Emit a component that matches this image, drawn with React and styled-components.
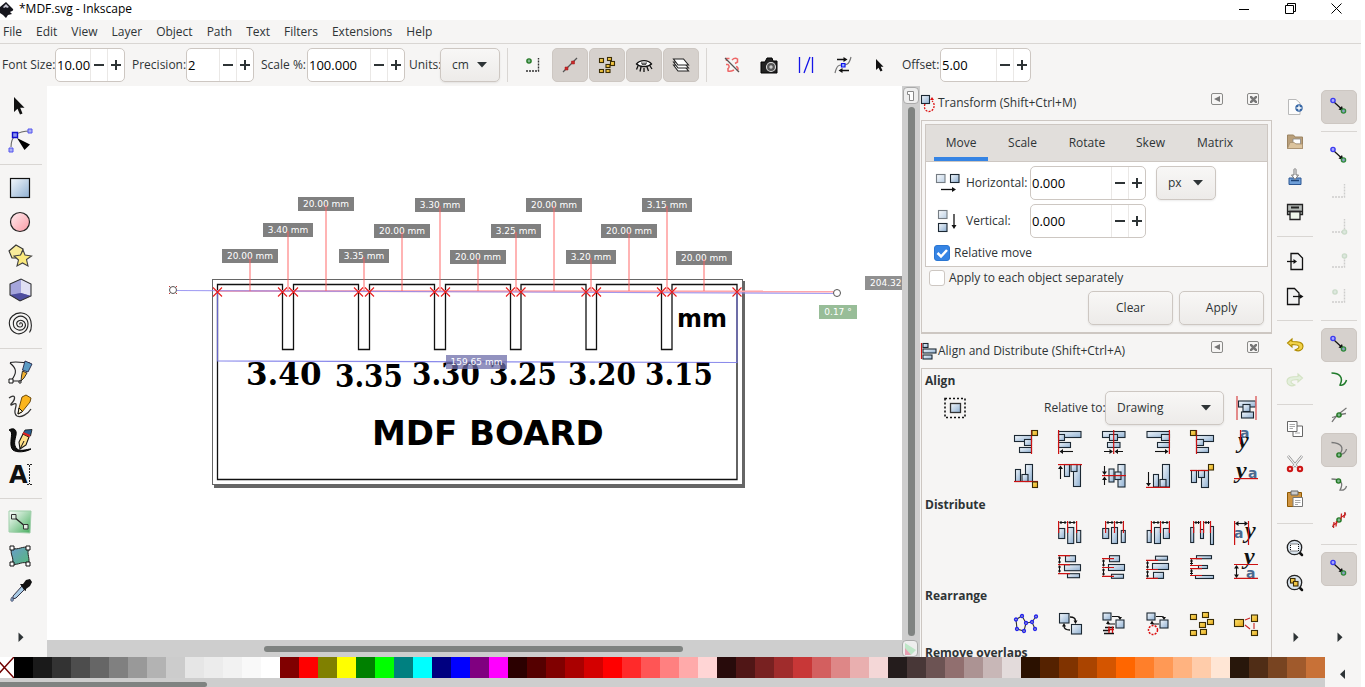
import React from "react";
import styled, { createGlobalStyle, css } from "styled-components";

const ui = '"Open Sans", "Noto Sans", sans-serif';
const line = "#d9d6d3";
const edge = "#cdc7c2";
const ink = "#2e3436";

const GlobalStyle = createGlobalStyle`
  *, *::before, *::after { box-sizing: border-box; }
  html, body { margin: 0; }
  body { background: #fff; color: ${ink}; font: 12px/16px ${ui}; overflow: hidden; }
  button, input, select { font: inherit; color: inherit; margin: 0; }
  svg { display: block; flex: none; }
`;

/* ---------- shell ---------- */

const Window = styled.div`
  display: flex;
  flex-direction: column;
  height: 100vh;
  padding-right: 4px;
  background: #fff;
`;

const TitleBar = styled.header`
  display: flex;
  align-items: center;
  height: 20px;
  padding-right: 2px;
  flex: none;
  background: #fff;
  color: #000;
`;

const Title = styled.h1`
  flex: 1;
  margin: 0 0 2px 4px;
  font-size: 12px;
  font-weight: 400;
`;

const WindowButton = styled.button`
  display: grid;
  place-items: center;
  width: 46px;
  height: 16px;
  margin-bottom: 4px;
  padding: 0;
  border: 0;
  background: none;
`;

const MenuBar = styled.nav`
  display: flex;
  flex: none;
  height: 24px;
  gap: 14px;
  padding: 4px 3px 0;
  background: #f6f5f4;
  border-bottom: 1px solid ${line};
`;

const MenuLink = styled.a`
  color: ${ink};
  text-decoration: none;
`;

const OptionsBar = styled.div`
  display: flex;
  flex: none;
  align-items: center;
  height: 42px;
  padding: 0 2px;
  background: #f6f5f4;
`;

const Main = styled.main`
  display: flex;
  flex: 1;
  min-height: 0;
  background: #f6f5f4;
`;

/* ---------- controls ---------- */

const Field = styled.div`
  display: flex;
  align-items: center;
  margin-right: ${(p) => p.$after || 7}px;
`;

const FieldLabel = styled.label`
  width: ${(p) => p.$w}px;
  flex: none;
  white-space: nowrap;
`;

const SpinBox = styled.div`
  display: flex;
  flex: none;
  width: ${(p) => p.$w}px;
  height: 34px;
  border: 1px solid ${edge};
  border-radius: 5px;
  background: #fff;
  overflow: hidden;
`;

const SpinInput = styled.input`
  flex: 1;
  min-width: 0;
  padding: 0 0 0 1px;
  border: 0;
  background: none;
  color: #000;
  font-size: 13px;
  outline: none;
`;

const SpinButton = styled.button`
  display: grid;
  place-items: center;
  width: 17px;
  padding: 0;
  border: 0;
  border-left: 1px solid #eae8e6;
  background: none;
`;

const raised = css`
  border: 1px solid ${edge};
  border-radius: 5px;
  background: linear-gradient(#f8f7f6, #edebe9);
  box-shadow: 0 1px 2px rgba(0, 0, 0, 0.08);
`;

const SelectWrap = styled.div`
  display: flex;
  align-items: center;
  position: relative;
  width: ${(p) => p.$w}px;
  height: 34px;
  flex: none;
  ${raised}
  svg { position: absolute; right: 12px; pointer-events: none; }
`;

const NativeSelect = styled.select`
  width: 100%;
  height: 100%;
  padding: 0 0 0 11px;
  border: 0;
  appearance: none;
  background: none;
  outline: none;
`;

const PushButton = styled.button`
  width: 85px;
  height: 34px;
  padding: 0;
  ${raised}
`;

const VRule = styled.div`
  width: 1px;
  height: 34px;
  margin: 0 7px;
  background: ${line};
`;

const HRule = styled.div`
  flex: none;
  width: ${(p) => p.$w || 36}px;
  height: 1px;
  margin: 7px 0 ${(p) => p.$below || 7}px;
  background: ${line};
`;

const IconButton = styled.button`
  display: grid;
  place-items: center;
  flex: none;
  width: 36px;
  height: 34px;
  padding: 0;
  border: 1px solid ${(p) => (p.$on ? edge : "transparent")};
  border-radius: 5px;
  background: ${(p) => (p.$on ? "#d6d1cd" : "none")};
  svg { opacity: ${(p) => (p.$dim ? 0.2 : 1)}; }
`;

const OptionButtons = styled.div`
  display: flex;
  gap: 1px;
  margin-right: ${(p) => p.$after || 0}px;
`;

function Spin({ id, label, labelWidth, width, value, after }) {
  return (
    <Field $after={after}>
      {label && <FieldLabel htmlFor={id} $w={labelWidth}>{label}</FieldLabel>}
      <SpinBox $w={width}>
        <SpinInput id={id} defaultValue={value} />
        <SpinButton aria-label="Decrease">
          <svg width="12" height="12"><path d="M1 6H11" stroke={ink} strokeWidth="2" /></svg>
        </SpinButton>
        <SpinButton aria-label="Increase">
          <svg width="12" height="12"><path d="M1 6H11M6 1V11" stroke={ink} strokeWidth="2" /></svg>
        </SpinButton>
      </SpinBox>
    </Field>
  );
}

function Select({ id, value, width, label }) {
  return (
    <SelectWrap $w={width}>
      <NativeSelect id={id} aria-label={label} defaultValue={value}>
        <option>{value}</option>
      </NativeSelect>
      <svg width="10" height="6"><path d="M0 0H10L5 5.5Z" fill={ink} /></svg>
    </SelectWrap>
  );
}

/* ---------- icon drawings ---------- */

const Bar = ({ r }) => (
  <rect x={r[0]} y={r[1]} width={r[2]} height={r[3]} fill="url(#steel)" stroke="#1c2833" strokeWidth="1.1" />
);
const Bars = ({ of }) => of.map((r, i) => <Bar key={i} r={r} />);
const Gold = ({ of }) =>
  of.map((r, i) => (
    <rect key={i} x={r[0]} y={r[1]} width={r[2]} height={r[3]} fill="url(#gold)" stroke="#3b2d05" strokeWidth="1.1" />
  ));
const Red = ({ d }) => <path d={d} fill="none" stroke="#cc1111" strokeWidth="1.2" />;
const Ink = ({ d, w = 1.1, fill = "none", stroke = "#111" }) => (
  <path d={d} fill={fill} stroke={stroke} strokeWidth={w} />
);
const Head = ({ d }) => <path d={d} fill="#111" />;
const LetterA = ({ x, y }) => (
  <text x={x} y={y} fontFamily="DejaVu Sans" fontWeight="700" fontSize="14" fill="#4a6a90">a</text>
);
const LetterY = ({ x, y }) => (
  <text x={x} y={y} fontFamily="Liberation Serif" fontWeight="700" fontStyle="italic" fontSize="24" fill="#111">y</text>
);
const Node = ({ x, y, c, f }) => <circle cx={x} cy={y} r="2.1" fill={f} stroke={c} strokeWidth="1.4" />;
const GreenNode = ({ x, y }) => <Node x={x} y={y} c="#227722" f="#7fb98f" />;

const spread = {
  left: (
    <>
      <Bars of={[[0.7, 7.5, 6, 10], [9.7, 6.5, 6, 16], [18.7, 9.5, 4, 12]]} />
      <Red d="M.6 0V12M9.6 0V12M18.6 0V12" />
      <Ink d="M1.5 1.5H8.5M10.5 1.5H17.5M3 0V3M7 0V3M12 0V3M16 0V3" />
    </>
  ),
  center: (
    <>
      <Bars of={[[0.7, 7.5, 6, 10], [9.5, 6.5, 6, 16], [19.3, 9.5, 4, 12]]} />
      <Red d="M3.6 0V12M12.5 0V12M21.4 0V12" />
      <Ink d="M4.5 1.5H11.5M13.5 1.5H20.5M6 0V3M10 0V3M15 0V3M19 0V3" />
    </>
  ),
  right: (
    <>
      <Bars of={[[1.2, 9.5, 4, 12], [8.5, 6.5, 6, 16], [17.4, 7.5, 6, 10]]} />
      <Red d="M5.4 0V12M14.5 0V12M23.4 0V12" />
      <Ink d="M6.3 1.5H13.5M15.5 1.5H22.5M8 0V3M12 0V3M17 0V3M21 0V3" />
    </>
  ),
  gaps: (
    <>
      <Bars of={[[0.7, 6.5, 3, 15], [10.5, 8.5, 3, 9], [20.5, 5.5, 3, 18]]} />
      <Red d="M3.6 0V12M10.5 0V12M13.6 0V12M20.5 0V12" />
      <Ink d="M4.3 1.5H9.8M14.3 1.5H19.8M6 0V3M8.5 0V3M16 0V3M18.5 0V3" />
    </>
  ),
};
const transpose = (drawing) => <g transform="matrix(0 1 1 0 0 0)">{drawing}</g>;

const snapPair = (
  <>
    <Ink d="M7 7L14 13.5" w={1.2} />
    <Head d="M16.5 16L11.500 14.500L15 11Z" />
    <Node x={6} y={5.5} c="#3a3af0" f="#a8a8ff" />
    <Node x={16.5} y={16} c="#2f8a3a" f="#8b9fc4" />
  </>
);
const dottedCorner = <path d="M5 18H17.5V5" fill="none" stroke="#333" strokeWidth="1.4" strokeDasharray="2 1" />;
const pageShape = (
  <path d="M8 4.5H15L19.5 9V20.5H8Z" fill="#f1f1f1" stroke="#111" strokeWidth="1.3" />
);
const lens = (
  <>
    <path d="M16.5 16.500L19 19" stroke="#111" strokeWidth="2.500" strokeLinecap="round" />
    <circle cx="11.5" cy="11.5" r="7.2" fill="#dbe5ee" stroke="#222" strokeWidth="1.3" />
  </>
);

const icons = {
  pointer: <Head d="M6 3V18L9.500 14.800L12 20.500L14.500 19.400L12.200 13.800H16.500Z" />,
  nodeTool: (
    <>
      <path d="M3 19C3 8 9 3 22 3" fill="none" stroke="#666" strokeWidth="1.1" />
      <path d="M9 10L22 16.500L16.5 22Z" fill="#000" />
      <path d="M1 20H5V24H1ZM20 1H24V5H20Z" fill="#aab0f5" stroke="#5555ee" />
      <path d="M4.5 4.5H9.5V9.5H4.5Z" fill="#8d95ee" stroke="#1111cc" strokeWidth="1.4" />
    </>
  ),
  rect: <rect x="2.5" y="2.5" width="19" height="19" fill="url(#steel)" stroke="#111" strokeWidth="1.2" />,
  ellipse: <circle cx="12" cy="12" r="9.5" fill="url(#pink)" stroke="#222" strokeWidth="1.2" />,
  star: (
    <>
      <path d="M8 1L15 5L12 14L4 14L1 7Z" fill="#f8eb9a" stroke="#333" strokeWidth="1.1" />
      <path d="M15 6L17 11L23.5 12L18.5 15.5L20 22L14.5 19L9 22L10.5 16L6 12L12.5 11Z" fill="#fbe97c" stroke="#444" strokeWidth="1.1" />
    </>
  ),
  box: (
    <>
      <path d="M2 6L13 1L23 6V18L12 23L2 17Z" fill="#7272bb" />
      <path d="M2 6L13 1V15L2 17Z" fill="#a5a5dc" />
      <path d="M13 1L23 6V18L13 15Z" fill="#e0e0f4" />
      <path d="M2 17L13 15L23 18L12 23Z" fill="#4d4d9f" />
      <path d="M2 6L13 1L23 6V18L12 23L2 17Z" fill="none" stroke="#333" strokeWidth="1.1" />
    </>
  ),
  spiral: (
    <path d="M12 12.500C11 10.500 14 10 14.500 12.500C14.800 15.500 10 16 9 13C7.500 9 13 6.500 16.300 10C19.500 14.500 15 19 10.500 18C4 16.500 4 8.500 8.500 5.500C14 2 20 6 20 12C20 19 14 23 8.500 21.500C1 19 -1 9 4.500 4C10 -1 18 .5 21.500 5.500C24 10 24 17 21.500 20.500" fill="none" stroke="#222" strokeWidth="1.1" />
  ),
  pen: (
    <>
      <path d="M2 2.500C9 1 16 3 22 3M2 3C8 8 10 12 3 21H13" fill="none" stroke="#222" strokeWidth="1.1" />
      <path d="M1 19H5V23H1Z" fill="#fff" stroke="#111" /><circle cx="12" cy="22" r="1.200" fill="#fff" stroke="#111" />
      <path d="M17 1L24 4L20 12L14.500 10Z" fill="#5b9bc4" stroke="#224" strokeWidth=".9" />
      <path d="M14.500 11L19 13L16 18L13 21L13.500 16Z" fill="#f0b030" stroke="#222" strokeWidth=".9" />
    </>
  ),
  pencil: (
    <>
      <path d="M1 4C8 -1 8 5 3 10C2 13 7 8 8 10C9 13 4 19 9 22C13 24 20 20 23 15" fill="none" stroke="#333" strokeWidth="1.300" />
      <path d="M14 3L18 1L23 4L22 8L14 18L10 20L11 14Z" fill="#fbb51e" stroke="#5b3a00" strokeWidth=".9" />
      <path d="M11 14L14.500 17.500L10 20Z" fill="#fff3c6" stroke="#111" />
    </>
  ),
  calligraphy: (
    <>
      <path d="M1 2C6 -1 9 2 8 7C7 12 5 17 9 21C13 24 19 21 23 21C18 24 9 25 5 22C1 18 4 9 3.500 5C3.200 3 2 3 1 2Z" fill="#111" stroke="#000" />
      <path d="M15 6L21 9L18 17L12 21L11 14Z" fill="#ffe08a" stroke="#111" strokeWidth="1.100" />
      <path d="M12 21L16 13" stroke="#111" /><path d="M17 2L24 1.500L22.500 8L15 5.500Z" fill="#285f92" stroke="#111" strokeWidth=".8" />
      <path d="M15 5L22 8" stroke="#d22" strokeWidth="2" />
    </>
  ),
  text: (
    <>
      <text x="1" y="21" fontFamily="DejaVu Sans" fontWeight="700" fontSize="24" fill="#111">A</text>
      <path d="M19 2.500H24M19 22.500H24M21.500 3V22" stroke="#222" strokeDasharray="2 1" />
    </>
  ),
  gradient: (
    <>
      <path d="M1 1H23L22 23L1 22Z" fill="url(#mint)" stroke="#9fcfaa" />
      <path d="M6 7L18 17" stroke="#222" strokeWidth="1.300" />
      <path d="M3.500 4.500H8V9H3.500ZM15.500 14.500H20V19H15.500Z" fill="#dfeee1" stroke="#333" />
    </>
  ),
  mesh: (
    <>
      <path d="M4 4C10 7 15 1 21 4C18 10 23 15 20 20C15 16 10 22 4 20C7 14 1 10 4 4Z" fill="url(#teal)" stroke="#222" />
      <path d="M2 2H6V6H2ZM18 2H22V6H18ZM18 18H22V22H18ZM2 18H6V22H2Z" fill="#fff" stroke="#111" />
    </>
  ),
  dropper: (
    <>
      <path d="M14 8L17 11L8 20L5 21L5 18Z" fill="#a9cbe6" stroke="#334" />
      <path d="M12 6L15 6L18 2L22 1L24 4L22 8L18 11L18 13L16 12Z" fill="#111" />
      <path d="M4 19C1 23 4 24 5 23C6 22 5 20 4 19Z" fill="#7c9dba" stroke="#446" strokeWidth=".7" />
    </>
  ),
  cornerDot: (
    <>
      {dottedCorner}
      <GreenNode x={8} y={8} />
    </>
  ),
  crossLine: (
    <>
      <path d="M5 19L19 5" stroke="#555" strokeWidth="1.200" />
      <path d="M7 14H10V17H7ZM13.500 8H16.500V11H13.500Z" fill="#c92a2a" stroke="#a01818" strokeWidth=".5" />
    </>
  ),
  goldSquares: <Gold of={[[4.5, 5.500, 4, 4], [12.5, 4.500, 4, 3], [15.5, 8.500, 4, 4], [11, 11.500, 4, 3], [4.5, 16.500, 4, 3], [11, 16.500, 4, 3]]} />,
  eye: (
    <>
      <path d="M4.500 11C8 6.500 16 6.500 19.500 11C16 14.500 8 14.500 4.500 11Z" fill="#fff" stroke="#111" strokeWidth="1.300" />
      <path d="M9.500 9.500A2.500 2.500 0 0 0 14.500 9.500" fill="#777" stroke="#333" strokeWidth=".8" />
      <path d="M6 13L4.500 16.500M9 14L8 18.500M12 15V19M15 14L16.500 18M18 13L20 16" stroke="#111" strokeWidth="1.300" />
    </>
  ),
  layers: [12, 9, 6].map((y) => (
    <path key={y} d={`M4.500 ${y}H14.500L19.500 ${y + 6}H9Z`} fill="#fff" stroke="#222" strokeWidth="1.100" />
  )),
  noShape: (
    <>
      <path d="M6.500 8V5.500H9.500M12 7C14 5 16 5 17.500 6V9L15 10.500M16 13.500C18 14 19 16 17 18M14 17C12 18 10 19 8 18V15.500C9.500 14.500 9.500 13 8 11.500H6" fill="none" stroke="#ee6666" strokeWidth="1.500" />
      <path d="M5 5L19 19" stroke="#555" strokeWidth="1.200" />
    </>
  ),
  camera: (
    <>
      <path d="M4 9H8L10 5H15L16 8H20V20H4Z" fill="#222" stroke="#000" />
      <circle cx="14" cy="14" r="4.500" fill="#555" stroke="#ddd" strokeWidth="1.100" /><circle cx="14" cy="14" r="1.700" fill="#ccc" />
    </>
  ),
  parallels: <path d="M5.500 4V20M18.500 4V20M10 20L16 4" stroke="#1515e8" strokeWidth="1.300" />,
  swapNode: (
    <>
      <path d="M4 20C6 11 9 12 12 12C15 12 18 12 20 4" fill="none" stroke="#777" strokeWidth="1.200" />
      <Ink d="M6 6.500H14M18 17.500H10" w={1.300} /><Head d="M16.500 6.500L12.500 4V9ZM7.500 17.500L11.500 15V20Z" />
      <path d="M10.500 10.500H14V14H10.500Z" fill="#8fb0ff" stroke="#11e" strokeWidth="1.200" />
    </>
  ),
  smallPointer: <Head d="M8 6V17L10.500 14.700L12.500 18.500L14.500 17.500L12.700 13.700H15.500Z" />,
  newDoc: (
    <>
      <path d="M5.500 4.500H13L17 8V19.500H5.500Z" fill="#fcfcfc" stroke="#b9b9b9" />
      <circle cx="16" cy="13" r="3.700" fill="#3465a4" /><path d="M13.500 13H18.500M16 10.500V15.500" stroke="#fff" strokeWidth="1.300" />
    </>
  ),
  open: (
    <>
      <path d="M4.500 5H10.500L12 7H19.500V18.500H4.500Z" fill="#b99f7a" stroke="#9c8462" />
      <path d="M10 9H17.500V14H10Z" fill="#fff" stroke="#888" strokeWidth=".8" />
      <path d="M4.500 18.500L7 12.500H11L13 14H19.500V18.500Z" fill="#dcc49e" stroke="#a89070" strokeWidth=".8" />
    </>
  ),
  save: (
    <>
      <path d="M6 13H18V19.500H6Z" fill="#6f9fd8" stroke="#2c5793" /><path d="M8 15.500H16" stroke="#1e4478" strokeWidth="1.500" />
      <path d="M11 4.500C11 3.500 13 3.500 13 4.500V10H15.500L12 14.500L8.500 10H11Z" fill="#fff" stroke="#777" />
    </>
  ),
  print: (
    <>
      <path d="M4.500 4.500H19.500V14.500H4.500Z" fill="#b4b9b6" stroke="#222" strokeWidth="1.300" />
      <path d="M8 7.500H16" stroke="#222" strokeWidth="2" /><path d="M7 11.500H17V19.500H7Z" fill="#eef6ea" stroke="#222" strokeWidth="1.300" />
      <path d="M5 11.500H19" stroke="#222" strokeWidth="1.500" />
    </>
  ),
  importDoc: (
    <>
      {pageShape}
      <Ink d="M4 12.500H11" w={1.300} /><Head d="M14 12.500L10.500 10V15Z" />
    </>
  ),
  exportDoc: (
    <>
      <path d="M4.500 4.500H11.500L16 9V20.500H4.500Z" fill="#f1f1f1" stroke="#111" strokeWidth="1.300" />
      <Ink d="M10 12.500H17" w={1.300} /><Head d="M20.500 12.500L16.500 10V15Z" />
    </>
  ),
  undo: <path d="M9 6L4.500 10L9 14V11.500C14 11.500 16 12 16 14C16 16 13 16 12 17C16 19 20 17 20 13.500C20 9 15 8.500 9 8.500Z" fill="#f2d24a" stroke="#b08c00" strokeWidth="1.100" />,
  redo: <path d="M15 6L19.500 10L15 14V11.500C10 11.500 8 12 8 14C8 16 11 16 12 17C8 19 4 17 4 13.500C4 9 9 8.500 15 8.500Z" fill="#9ad880" stroke="#4e9a06" strokeWidth="1.100" />,
  copy: (
    <>
      <path d="M10 9H19.500V19.500H10Z" fill="#fff" stroke="#666" /><path d="M4.500 4.500H14V14.500H4.500Z" fill="#fff" stroke="#666" />
      <path d="M6.500 7.500H12M6.500 9.500H12M6.500 11.500H10M12 16H17" stroke="#aaa" />
    </>
  ),
  cut: (
    <>
      <path d="M5 4L14 15M19 4L10 15" stroke="#777" strokeWidth="2.400" /><path d="M5 4L14 15M19 4L10 15" stroke="#f2f2f2" strokeWidth="1.200" />
      <circle cx="7" cy="17" r="2.200" fill="#fbb" stroke="#cc1515" strokeWidth="2" /><circle cx="17" cy="17" r="2.200" fill="#fbb" stroke="#cc1515" strokeWidth="2" />
    </>
  ),
  paste: (
    <>
      <path d="M4.500 5.500H18.500V19.500H4.500Z" fill="#cf9440" stroke="#8f5902" /><path d="M8 4H15V8H8Z" fill="#ccc" stroke="#666" />
      <path d="M10 10.500H19.500V19.500H10Z" fill="#fff" stroke="#777" /><path d="M12 13.500H17.500M12 15.500H17.500M12 17.500H15" stroke="#aaa" />
    </>
  ),
  zoomSelection: (
    <>
      {lens}
      <rect x="7.500" y="8" width="8" height="7" fill="#fff" stroke="#111" strokeDasharray="1 1" />
    </>
  ),
  zoomDrawing: (
    <>
      {lens}
      <Gold of={[[7.500, 7.500, 4.500, 4.500], [10.500, 10.500, 4.500, 4.500]]} />
    </>
  ),
  snapPair,
  corner: dottedCorner,
  cornerEnd: (
    <>
      {dottedCorner}
      <GreenNode x={17.500} y={18} />
    </>
  ),
  cornerUp: (
    <>
      {dottedCorner}
      <GreenNode x={17.500} y={7} />
    </>
  ),
  greenCurve: (
    <path d="M4.500 5C12 5 17 9 13 17C17 18 19 14 19.500 12" fill="none" stroke="#1f7a2a" strokeWidth="1.500" />
  ),
  crossing: (
    <>
      <path d="M5 19C9 12 14 9 19.500 5M5 14.500C10 13 14 11 19 10.500" fill="none" stroke="#777" strokeWidth="1.300" /><GreenNode x={12} y={12} />
    </>
  ),
  nodeCurve: (
    <>
      <path d="M4.500 4.500C15 5 17 10 13 16C16 17 19 14 19.500 11" fill="none" stroke="#777" strokeWidth="1.300" /><GreenNode x={12} y={17} />
    </>
  ),
  topCurve: (
    <>
      <path d="M4.500 6C14 6 17 10 13 17C17 18 19 15 19.500 13" fill="none" stroke="#777" strokeWidth="1.300" /><GreenNode x={11.500} y={8} />
    </>
  ),
  midpoints: (
    <>
      <path d="M5 19L19 5" stroke="#666" /><GreenNode x={12} y={12} />
      <path d="M7 14L6.500 20M9.500 13L9 18.500M5.500 17.500L10.500 14.500M14.500 5.500L14 11.500M18 4L17 10M13.500 9.500L19 6.500" stroke="#cc2222" strokeWidth="1.300" />
    </>
  ),
  transform: (
    <>
      <path d="M8 13C6 18 10 22 14 20C18 18 18 12 15 10" fill="none" stroke="#d11" strokeWidth="1.300" strokeDasharray="2 1.200" />
      <Bar r={[4.500, 4.500, 8, 8]} />
      <path d="M13 9L17 9L15 6Z" fill="#d11" />
    </>
  ),
  alignDock: (
    <>
      <path d="M4.500 4V20" stroke="#c11" strokeWidth="1.200" />
      <Bars of={[[6, 4.500, 5, 4], [6, 10, 13, 4], [6, 16, 9, 4]]} />
    </>
  ),
  moveH: (
    <>
      <g opacity=".6"><Bar r={[0.500, 3.500, 8.500, 8]} /></g>
      <Bar r={[14.500, 3.500, 8.500, 8]} />
      <Ink d="M5 18.500H17" w={1.300} /><Head d="M20 18.500L16 16V21Z" />
    </>
  ),
  moveV: (
    <>
      <g opacity=".6"><Bar r={[2.500, 1.500, 8.500, 8]} /></g>
      <Bar r={[2.500, 14.500, 8.500, 8]} />
      <Ink d="M18 5V17" w={1.300} /><Head d="M18 20L15.500 16H20.500Z" />
    </>
  ),
  selectionBox: (
    <>
      <rect x="2" y="2.500" width="20" height="19" fill="none" stroke="#111" strokeWidth="1.600" strokeDasharray="2 2" />
      <rect x="7.500" y="7.500" width="10" height="9" fill="url(#steel)" stroke="#333" strokeWidth="1.300" />
    </>
  ),
  asGroup: (
    <>
      <Bars of={[[4.500, 5, 17, 6], [9, 8.500, 7, 7], [7.500, 16, 12, 6]]} />
      <path d="M3 0V24M22 0V24" stroke="#e07878" strokeWidth="1.700" />
    </>
  ),
  alignRightOut: (
    <>
      <Bars of={[[0.500, 5.500, 17, 6], [5.500, 17.500, 12, 5], [10.500, 9.500, 7, 6]]} />
      <Red d="M17.500 0V24" /><Gold of={[[18, 0.500, 5.500, 5]]} />
    </>
  ),
  alignLeft: (
    <>
      <Bars of={[[0.500, 1.500, 22.500, 6], [0.500, 4.500, 6, 6], [0.500, 12.500, 12, 5]]} />
      <Red d="M.6 0V24" /><Ink d="M4 21.500H15" /><Head d="M1.500 21.500L5 19V24Z" />
    </>
  ),
  alignCenter: (
    <>
      <Bars of={[[0.500, 1.500, 22.500, 6], [7.500, 4.500, 8, 6], [5.500, 12.500, 12.500, 5]]} />
      <Red d="M11.700 0V24" /><Ink d="M2 21.500H8M15 21.500H21" /><Head d="M11 21.500L7.500 19V24ZM12.500 21.500L16 19V24Z" />
    </>
  ),
  alignRight: (
    <>
      <Bars of={[[1, 1.500, 22.500, 6], [15.500, 4.500, 8, 6], [11.500, 12.500, 12, 5]]} />
      <Red d="M23.400 0V24" /><Ink d="M9 21.500H20" /><Head d="M22.500 21.500L19 19V24Z" />
    </>
  ),
  alignLeftOut: (
    <>
      <Bars of={[[6.500, 5.500, 17, 6], [6.500, 9.500, 7, 6], [6.500, 17.500, 12, 5]]} />
      <Red d="M6.500 0V24" /><Gold of={[[0.500, 0.500, 5.500, 5]]} />
    </>
  ),
  textAnchorsV: (
    <>
      <LetterA x={6} y={8} /><LetterY x={4} y={18} /><Red d="M6.500 0V14" />
    </>
  ),
  alignBottomOut: (
    <>
      <Bars of={[[1.500, 5.500, 5, 12], [11.500, 0.500, 7, 17], [8, 10.500, 6, 7]]} />
      <Red d="M0 17.500H24" /><Gold of={[[18.500, 18, 5, 5.500]]} />
    </>
  ),
  alignTop: (
    <>
      <Bars of={[[6.500, 0.500, 5, 12], [15.500, 0.500, 7, 22], [13, 0.500, 6, 7]]} />
      <Red d="M0 .6H24" /><Ink d="M2.500 4V15" /><Head d="M2.500 1.500L0 5H5Z" />
    </>
  ),
  alignMiddle: (
    <>
      <Bars of={[[7, 5, 5, 13], [16, 0.500, 7, 22.500], [13, 8, 6, 7.500]]} />
      <Red d="M0 11.600H24" /><Ink d="M2.500 2V8M2.500 15V21" /><Head d="M2.500 11L0 7.500H5ZM2.500 12.500L0 16H5Z" />
    </>
  ),
  alignBottom: (
    <>
      <Bars of={[[7.500, 10.500, 5, 12.500], [16.500, 0.500, 7, 22.500], [14, 15.500, 6, 7.500]]} />
      <Red d="M0 23.400H24" /><Ink d="M2.500 8V19" /><Head d="M2.500 22.500L0 19H5Z" />
    </>
  ),
  alignTopOut: (
    <>
      <Bars of={[[1.500, 6.500, 5, 12], [11.500, 6.500, 7, 17], [8.500, 6.500, 6, 7]]} />
      <Red d="M0 6.500H19" /><Gold of={[[18.500, 0.500, 5, 5.500]]} />
    </>
  ),
  textAnchorsH: (
    <>
      <LetterY x={2} y={14} /><LetterA x={14} y={14} /><Red d="M0 14.600H24" />
    </>
  ),
  spreadLeft: spread.left,
  spreadCenter: spread.center,
  spreadRight: spread.right,
  spreadGapsH: spread.gaps,
  spreadTop: transpose(spread.left),
  spreadMiddle: transpose(spread.center),
  spreadBottom: transpose(spread.right),
  spreadGapsV: transpose(spread.gaps),
  spreadTextH: (
    <>
      <LetterA x={0} y={17} /><LetterY x={11} y={17} /><Red d="M.6 0V24M14.500 0V24" />
      <Ink d="M3 2.500H12" /><Head d="M1 2.500L4.500 0V5ZM14 2.500L10.500 0V5Z" />
    </>
  ),
  spreadTextV: (
    <>
      <LetterY x={10} y={9} /><LetterA x={12} y={23} /><Red d="M0 9.500H24M0 23.400H24" />
      <Ink d="M2.500 12V21" /><Head d="M2.500 10L0 13.500H5ZM2.500 23L0 19.500H5Z" />
    </>
  ),
  network: (
    <>
      <path d="M2 7.500L8 4L12 11L10 19L3 17ZM12 11L18 10L22 4.500M18 10L21 17" fill="none" stroke="#333" strokeWidth="1.100" />
      {[[2, 7.500], [8, 4], [3, 17], [10, 19], [12, 11], [18, 10], [22, 4.500], [21, 17]].map(([x, y]) => (
        <circle key={`${x}-${y}`} cx={x} cy={y} r="1.500" fill="#aab" stroke="#2222ee" strokeWidth="1.300" />
      ))}
    </>
  ),
  exchange: (
    <>
      <Bars of={[[1.500, 1.500, 9.500, 9.500], [13.500, 12.500, 10, 9.500]]} />
      <Ink d="M12 5C16 5 17.500 6 17.500 9M12 18C8 18 6 17 6 14" w={1.300} /><Head d="M17.500 12L15.500 8.500H19.500ZM6 11L4 14.500H8Z" />
    </>
  ),
  exchangeZ: (
    <>
      <Bars of={[[1, 1, 8, 7], [14, 8, 8, 8]]} />
      <Ink d="M10 4.500H16C17.500 4.500 18 5 18 6M13 12H6V10" /><Head d="M18 8L16 5H20ZM6 8.500L4 12H8Z" />
      <Ink d="M3 15.500H12M1 18.500H8M2 21.500H12" w={1.600} /><path d="M7 14.500V21M10.500 14.500V21M6 17.500H12" stroke="#c11" strokeWidth="1.300" />
    </>
  ),
  exchangeTurn: (
    <>
      <Bars of={[[1, 1, 8, 7], [14, 8, 8, 8]]} />
      <Ink d="M10 4.500H16C17.500 4.500 18 5 18 6M13 12H6V10" /><Head d="M18 8L16 5H20ZM6 8.500L4 12H8Z" />
      <circle cx="7" cy="18" r="4.500" fill="none" stroke="#d11" strokeWidth="1.500" strokeDasharray="2 1.200" />
    </>
  ),
  randomize: <Gold of={[[0.500, 2.500, 6, 5], [12.500, 0.500, 6, 5], [17.500, 7.500, 6, 5], [9.500, 10.500, 6, 5], [0.500, 18.500, 6, 5], [10.500, 17.500, 6, 5]]} />,
  unclump: (
    <>
      <path d="M11 8L16 6M11 13L16 17M20 11V17" stroke="#c22" strokeWidth="1.100" />
      <Gold of={[[0.500, 7.500, 9, 7], [17.500, 3, 6, 6.500], [17.500, 18.500, 6, 5]]} />
    </>
  ),
  chevron: <path d="M10.500 7.500V17L15.500 12.200Z" fill={ink} />,
  chevronBack: <path d="M14 7.500V17L9 12.200Z" fill={ink} />,
};

const Icon = ({ name }) => (
  <svg width="24" height="24" viewBox="0 0 24 24" overflow="visible" aria-hidden="true">{icons[name]}</svg>
);

const Paints = styled.svg`
  position: absolute;
  width: 0;
  height: 0;
`;

const gradients = [
  ["steel", "#f4f8fc", "#8fb0d2"],
  ["pink", "#ffeef0", "#f99aa4"],
  ["gold", "#ffe36a", "#e3a51a"],
  ["mint", "#ffffff", "#45ad5d"],
  ["teal", "#6a9ccc", "#55b87a"],
];

/* ---------- toolbox and side bars ---------- */

const SideBar = styled.aside`
  display: flex;
  flex-direction: column;
  align-items: center;
  flex: none;
  width: ${(p) => p.$w}px;
  padding: ${(p) => p.$top}px ${(p) => p.$right || 0}px 8px 0;
  background: #f6f5f4;
  overflow: hidden;
`;

const Group = styled.div`
  display: flex;
  flex-direction: column;
  gap: ${(p) => p.$gap || 0}px;
`;

const MoreButton = styled.button`
  display: grid;
  place-items: center;
  flex: none;
  width: 34px;
  height: 24px;
  margin-top: auto;
  padding: 0;
  border: 0;
  background: none;
`;

const tools = [
  ["pointer", "nodeTool"],
  ["rect", "ellipse", "star", "box", "spiral"],
  ["pen", "pencil", "calligraphy", "text"],
  ["gradient", "mesh", "dropper"],
];
const commands = [
  ["newDoc", "open", "save", "print"],
  ["importDoc", "exportDoc"],
  ["undo", "redo"],
  ["copy", "cut", "paste"],
  ["zoomSelection", "zoomDrawing"],
];
const snaps = [
  ["snapPair"],
  ["snapPair", "corner", "cornerEnd", "cornerUp", "cornerDot"],
  ["snapPair", "greenCurve", "crossing", "nodeCurve", "topCurve", "midpoints"],
  ["snapPair"],
];
const dimmed = ["corner", "cornerEnd", "cornerUp", "cornerDot", "redo"];
const pressed = ["0-0", "2-0", "2-3", "3-0"];

function ButtonGroups({ groups, gap, ruleWidth, below, toggles }) {
  return groups.map((names, g) => (
    <React.Fragment key={g}>
      {g > 0 && <HRule $w={ruleWidth} $below={below} />}
      <Group $gap={gap}>
        {names.map((name, i) => (
          <IconButton
            key={i}
            aria-label={name}
            $dim={dimmed.includes(name)}
            $on={toggles && pressed.includes(`${g}-${i}`)}
          >
            <Icon name={name} />
          </IconButton>
        ))}
      </Group>
    </React.Fragment>
  ));
}

/* ---------- canvas ---------- */

const Stage = styled.section`
  display: grid;
  grid-template: minmax(0, 1fr) 17px / minmax(0, 1fr) 18px;
  flex: 1;
  min-width: 0;
  background: #cecece;
`;

const Paper = styled.div`
  background: #fff;
  overflow: hidden;
`;

const VTrack = styled.div`
  display: flex;
  flex-direction: column;
  align-items: center;
  padding: 1px 0 4px;
  gap: 3px;
`;

const VThumb = styled.div`
  flex: 1;
  width: 7px;
  border-radius: 4px;
  background: #7f8381;
`;

const HTrack = styled.div`
  display: flex;
  align-items: center;
`;

const HThumb = styled.div`
  width: 49%;
  height: 6px;
  margin-left: 25.4%;
  border-radius: 3px;
  background: #7f8381;
`;

const CornerButton = styled.button`
  display: grid;
  place-items: center;
  width: 16px;
  height: 17px;
  padding: 0;
  border: 1px solid #aaa;
  border-radius: 4px;
  background: #eee;
`;

const slots = [[282.5, 293.5], [358.5, 369.5], [434.5, 445.5], [510.5, 521], [586, 596.5], [661.5, 672]];
const measures = [
  [222, 249, "20.00 mm"], [263, 223, "3.40 mm"], [298, 197, "20.00 mm"], [339, 249, "3.35 mm"],
  [374, 224, "20.00 mm"], [415, 198, "3.30 mm"], [450, 250, "20.00 mm"], [491, 224, "3.25 mm"],
  [526, 198, "20.00 mm"], [566, 250, "3.20 mm"], [601, 224, "20.00 mm"], [642, 198, "3.15 mm"],
  [676, 251, "20.00 mm"],
];
const numerals = [
  [246, 385, "3.40", "DejaVu Serif"], [335, 387, "3.35"], [412, 385, "3.30"],
  [489, 385, "3.25"], [568, 385, "3.20"], [645, 385, "3.15"],
];

function Tag({ x, y, w, text, fill = "#808080" }) {
  return (
    <>
      <rect x={x} y={y} width={w} height="14" fill={fill} />
      <text x={x + w / 2} y={y + 10} textAnchor="middle" fontFamily="DejaVu Sans" fontSize="9" fill="#fff">{text}</text>
    </>
  );
}

function Drawing() {
  const outline = `M217.500 284.500${slots.map(([a, b]) => `H${a}V349.500H${b}V284.500`).join("")}H737V479.500H217.500Z`;
  const marks = [217.5, ...slots.flat(), 737];
  return (
    <svg width="855" height="554" viewBox="47 86 855 554">
      <path d="M214 486.500H743.500V281" fill="none" stroke="#666" strokeWidth="3" />
      <rect x="212.500" y="279.500" width="530" height="205" fill="#fff" stroke="#666" />
      <path d={outline} fill="none" stroke="#111" strokeWidth="1.300" />
      <g fontWeight="700" fill="#000">
        {numerals.map(([x, y, t, family = "DejaVu Serif Condensed"]) => (
          <text key={t} x={x} y={y} fontFamily={family} fontSize="31">{t}</text>
        ))}
        <text x="372" y="445" fontFamily="DejaVu Sans" fontSize="34">MDF BOARD</text>
        <text x="677" y="327" fontFamily="DejaVu Sans" fontSize="24">mm</text>
      </g>
      <path d="M217.500 292V361L737 362.500V292" fill="none" stroke="#7777e8" strokeOpacity=".85" strokeWidth="1.200" />
      <path d="M217 291L837 291.500" stroke="#ffa6aa" strokeWidth="2" />
      <path d="M177 290.500L833 293.500" stroke="#8b86f0" strokeOpacity=".8" strokeWidth="1.200" />
      {measures.map(([x, y, t]) => (
        <Tag key={x} x={x} y={y} w={t.length > 7 ? 56 : 50} text={t} />
      ))}
      {measures.map(([x, y, t]) => {
        const cx = x + (t.length > 7 ? 28 : 25);
        return <path key={x} d={`M${cx} ${y + 8}V291`} stroke="#ff5a5a" strokeOpacity=".65" strokeWidth="1.400" />;
      })}
      {marks.map((x) => (
        <path key={x} d={`M${x - 4.500} 287.500L${x + 4.500} 296.500M${x + 4.500} 287.500L${x - 4.500} 296.500`} stroke="#e81c1c" strokeWidth="1.100" />
      ))}
      <path d="M169 286L177 294M177 286L169 294" stroke="#c33" />
      <circle cx="173" cy="290" r="3.500" fill="#fff" stroke="#555" />
      <circle cx="837" cy="293" r="3.500" fill="#fff" stroke="#555" />
      <Tag x={865} y={276} w={62} text="204.32 mm" fill="#909090" />
      <Tag x={819} y={305} w={38} text="0.17 °" fill="#98bd98" />
      <Tag x={446} y={355} w={61} text="159.65 mm" fill="rgba(110,110,170,.75)" />
    </svg>
  );
}

/* ---------- dock ---------- */

const Dock = styled.aside`
  display: flex;
  flex-direction: column;
  flex: none;
  width: 352px;
  padding-left: 1px;
  overflow: hidden;
`;

const DockHeader = styled.div`
  display: flex;
  align-items: center;
  flex: none;
  height: 34px;
  padding-right: 13px;
  svg { margin-right: -3px; margin-left: -4px; }
`;

const DockTitle = styled.h2`
  flex: 1;
  margin: 0;
  font-size: 12px;
  font-weight: 400;
`;

const DockButton = styled.button`
  display: grid;
  place-items: center;
  width: 12px;
  height: 12px;
  margin: 0 0 8px 24px;
  padding: 0;
  border: 1px solid #8a8a88;
  border-radius: 2px;
  background: none;
  svg { margin: 0; }
`;

const Frame = styled.section`
  flex: none;
  border: solid ${edge};
  border-width: 1px 1px ${(p) => (p.$open ? 0 : 2)}px;
  padding: ${(p) => (p.$open ? 0 : 3)}px 3px 3px;
`;

const Notebook = styled.div`
  border: 1px solid ${edge};
  background: #fff;
`;

const Tabs = styled.div`
  display: flex;
  height: 37px;
  margin-bottom: 2px;
  padding-left: 8px;
  background: #e1dedb;
  border-bottom: 1px solid ${edge};
`;

const Tab = styled.button`
  width: ${(p) => p.$w}px;
  margin-right: 8px;
  padding: 3px 0 0;
  border: 0;
  border-bottom: 4px solid ${(p) => (p.$on ? "#3584e4" : "transparent")};
  background: none;
`;

const TransformRow = styled.div`
  display: flex;
  align-items: center;
  height: 38px;
  padding-left: 10px;
`;

const RowIcon = styled.span`
  width: 30px;
`;

const CheckLabel = styled.label`
  display: flex;
  align-items: center;
  gap: 4px;
  height: ${(p) => p.$h}px;
  padding-left: ${(p) => p.$left}px;
`;

const Check = styled.input`
  appearance: none;
  width: 16px;
  height: 16px;
  border: 1px solid ${edge};
  border-radius: 3px;
  background: #fff;
  &:checked {
    border-color: #2a76d2;
    background: #3584e4 url("data:image/svg+xml,%3Csvg xmlns='http://www.w3.org/2000/svg' viewBox='0 0 14 14'%3E%3Cpath d='M2.500 7L6 10.500L12 4' fill='none' stroke='white' stroke-width='2.500'/%3E%3C/svg%3E");
  }
`;

const Actions = styled.div`
  display: flex;
  justify-content: flex-end;
  gap: 6px;
  padding: 3px 4px 4px;
`;

const SectionTitle = styled.h3`
  height: 23px;
  margin: 0;
  padding-top: 3px;
  font-size: 12px;
  line-height: 17px;
  font-weight: 700;
`;

const RelativeRow = styled.div`
  display: flex;
  align-items: center;
  justify-content: space-between;
  padding-left: 12px;
  margin-top: -1px;
`;

const IconGrid = styled.div`
  display: grid;
  grid-template-columns: repeat(${(p) => p.$cols}, 44px);
  justify-content: end;
  justify-items: center;
`;

const RelativePick = styled.div`
  display: flex;
  align-items: center;
  ${IconButton} { margin: 0 4px; }
`;

const IconRows = ({ cols, names }) => (
  <IconGrid $cols={cols}>
    {names.map((n) => (
      <IconButton key={n} aria-label={n}><Icon name={n} /></IconButton>
    ))}
  </IconGrid>
);

function Header({ icon, title }) {
  return (
    <DockHeader>
      <Icon name={icon} />
      <DockTitle>{title}</DockTitle>
      <DockButton aria-label="Iconify">
        <svg width="6" height="6"><path d="M6 0V6L0 3Z" fill="#777" /></svg>
      </DockButton>
      <DockButton aria-label="Close">
        <svg width="7" height="7"><path d="M0 0L7 7M7 0L0 7" stroke="#777" strokeWidth="2.500" /></svg>
      </DockButton>
    </DockHeader>
  );
}

/* ---------- palette ---------- */

const Footer = styled.footer`
  display: flex;
  flex: none;
  height: 30px;
  background: #f6f5f4;
`;

const PaletteArea = styled.div`
  flex: 1;
  min-width: 0;
  background: #cecece;
`;

const Swatches = styled.div`
  display: flex;
  height: 21px;
  margin-bottom: 4px;
  overflow: hidden;
`;

const Swatch = styled.button`
  flex: none;
  width: 19px;
  padding: 0;
  border: 0;
  background: ${(p) => p.$c};
`;

const NoPaint = styled.button`
  flex: none;
  width: 14px;
  padding: 0;
  border: 0;
  background: #fff;
`;

const PaletteThumb = styled.div`
  width: 207px;
  height: 5px;
  border-radius: 0 3px 3px 0;
  background: #7f8381;
`;

const PaletteMenu = styled.button`
  display: grid;
  place-items: center;
  width: 36px;
  padding: 4px 0 0;
  border: 0;
  background: none;
`;

const palette = (
  "000000 1a1a1a 333333 4d4d4d 666666 808080 999999 b3b3b3 cccccc e6e6e6 ececec f2f2f2 f9f9f9 ffffff " +
  "800000 ff0000 808000 ffff00 008000 00ff00 008080 00ffff 000080 0000ff 800080 ff00ff " +
  "2b0000 550000 800000 aa0000 d40000 ff0000 ff2a2a ff5555 ff8080 ffaaaa ffd5d5 " +
  "280b0b 501616 782121 a02c2c c83737 d35f5f de8787 e9afaf f4d7d7 " +
  "241c1c 483737 6c5353 916f6f ac9393 c8b7b7 e3dbdb " +
  "2b1100 552200 803300 aa4400 d45500 ff6600 ff7f2a ff9955 ffb380 ffccaa ffe6d5 " +
  "28170b 502d16 784421 a05a2c c87137"
).split(" ");

const menus = ["File", "Edit", "View", "Layer", "Object", "Path", "Text", "Filters", "Extensions", "Help"];

export default function App() {
  return (
    <Window>
      <GlobalStyle />
      <Paints aria-hidden="true">
        <defs>
          {gradients.map(([id, a, b]) => (
            <linearGradient key={id} id={id} x1="0" y1="0" x2="1" y2="1">
              <stop offset="0" stopColor={a} />
              <stop offset="1" stopColor={b} />
            </linearGradient>
          ))}
        </defs>
      </Paints>

      <TitleBar>
        <svg width="15" height="18">
          <path d="M6 1L13 8C14 10 11 10 10 11L12 13L8 14L6 17L3 14L0 12V6Z" fill="#15151c" />
          <path d="M6 3L9 6L7 7L6 6L4 7L3 6Z" fill="#c8c8d4" />
        </svg>
        <Title>*MDF.svg - Inkscape</Title>
        <WindowButton aria-label="Minimize">
          <svg width="11" height="11"><path d="M0 6.500H10" stroke="#000" /></svg>
        </WindowButton>
        <WindowButton aria-label="Restore">
          <svg width="11" height="11"><path d="M.5 2.500H8.500V10.500H.5ZM2.500 2.500V.5H10.500V8.500H8.500" fill="none" stroke="#000" /></svg>
        </WindowButton>
        <WindowButton aria-label="Close">
          <svg width="11" height="11"><path d="M.5 .5L10.500 10.500M10.500 .5L.5 10.500" stroke="#000" /></svg>
        </WindowButton>
      </TitleBar>

      <MenuBar>
        {menus.map((m) => <MenuLink key={m} href="#">{m}</MenuLink>)}
      </MenuBar>

      <OptionsBar>
        <Spin id="font-size" label="Font Size:" labelWidth={53} width={70} value="10.00" />
        <Spin id="precision" label="Precision:" labelWidth={54} width={68} value="2" />
        <Spin id="scale" label="Scale %:" labelWidth={46} width={98} value="100.000" after={4} />
        <FieldLabel htmlFor="units" $w={31}>Units:</FieldLabel>
        <Select id="units" value="cm" width={60} />
        <VRule />
        <OptionButtons>
          <IconButton aria-label="cornerDot"><Icon name="cornerDot" /></IconButton>
          {["crossLine", "goldSquares", "eye", "layers"].map((n) => (
            <IconButton key={n} aria-label={n} $on><Icon name={n} /></IconButton>
          ))}
        </OptionButtons>
        <VRule />
        <OptionButtons $after={4}>
          {["noShape", "camera", "parallels", "swapNode", "smallPointer"].map((n) => (
            <IconButton key={n} aria-label={n}><Icon name={n} /></IconButton>
          ))}
        </OptionButtons>
        <Spin id="offset" label="Offset:" labelWidth={38} width={91} value="5.00" />
      </OptionsBar>

      <Main>
        <SideBar $w={47} $top={3} $right={7}>
          <ButtonGroups groups={tools} ruleWidth={44} below={6} />
          <MoreButton aria-label="More tools"><Icon name="chevron" /></MoreButton>
        </SideBar>

        <Stage>
          <Paper><Drawing /></Paper>
          <VTrack>
            <CornerButton aria-label="Lock guides">
              <svg width="8" height="10"><path d="M.5 .5H6.500V9.500H2.500V3.500H.5Z" fill="#fff" stroke="#888" /></svg>
            </CornerButton>
            <VThumb />
          </VTrack>
          <HTrack><HThumb /></HTrack>
          <CornerButton aria-label="Color management">
            <svg width="14" height="14"><path d="M2 1L13 8L8 13L2 12Z" fill="#bfe6c8" /><path d="M2 6L8 13H2Z" fill="#e8a0b4" /></svg>
          </CornerButton>
        </Stage>

        <Dock>
          <Header icon="transform" title="Transform (Shift+Ctrl+M)" />
          <Frame>
            <Notebook>
              <Tabs role="tablist">
                {[["Move", 54], ["Scale", 53], ["Rotate", 60], ["Skew", 51], ["Matrix", 62]].map(([t, w], i) => (
                  <Tab key={t} role="tab" $w={w} $on={i === 0}>{t}</Tab>
                ))}
              </Tabs>
              <TransformRow>
                <RowIcon><Icon name="moveH" /></RowIcon>
                <Spin id="move-h" label="Horizontal:" labelWidth={64} width={116} value="0.000" after={10} />
                <Select value="px" width={60} label="Unit" />
              </TransformRow>
              <TransformRow>
                <RowIcon><Icon name="moveV" /></RowIcon>
                <Spin id="move-v" label="Vertical:" labelWidth={64} width={116} value="0.000" />
              </TransformRow>
              <CheckLabel $h={26} $left={8}><Check type="checkbox" defaultChecked />Relative move</CheckLabel>
            </Notebook>
            <CheckLabel $h={21} $left={4}><Check type="checkbox" />Apply to each object separately</CheckLabel>
            <Actions>
              <PushButton>Clear</PushButton>
              <PushButton>Apply</PushButton>
            </Actions>
          </Frame>
          <Header icon="alignDock" title="Align and Distribute (Shift+Ctrl+A)" />
          <Frame $open>
            <SectionTitle>Align</SectionTitle>
            <RelativeRow>
              <IconButton aria-label="selectionBox"><Icon name="selectionBox" /></IconButton>
              <RelativePick>
                <FieldLabel htmlFor="relative" $w={61}>Relative to:</FieldLabel>
                <Select id="relative" value="Drawing" width={119} />
                <IconButton aria-label="asGroup"><Icon name="asGroup" /></IconButton>
              </RelativePick>
            </RelativeRow>
            <IconRows cols={6} names={[
              "alignRightOut", "alignLeft", "alignCenter", "alignRight", "alignLeftOut", "textAnchorsV",
              "alignBottomOut", "alignTop", "alignMiddle", "alignBottom", "alignTopOut", "textAnchorsH",
            ]} />
            <SectionTitle>Distribute</SectionTitle>
            <IconRows cols={5} names={[
              "spreadLeft", "spreadCenter", "spreadRight", "spreadGapsH", "spreadTextH",
              "spreadTop", "spreadMiddle", "spreadBottom", "spreadGapsV", "spreadTextV",
            ]} />
            <SectionTitle>Rearrange</SectionTitle>
            <IconRows cols={6} names={["network", "exchange", "exchangeZ", "exchangeTurn", "randomize", "unclump"]} />
            <SectionTitle>Remove overlaps</SectionTitle>
          </Frame>
        </Dock>

        <SideBar $w={45} $top={4}>
          <ButtonGroups groups={commands} gap={1} />
          <MoreButton aria-label="More commands"><Icon name="chevron" /></MoreButton>
        </SideBar>
        <SideBar $w={44} $top={4}>
          <ButtonGroups groups={snaps} gap={1} toggles />
          <MoreButton aria-label="More snapping"><Icon name="chevron" /></MoreButton>
        </SideBar>
      </Main>

      <Footer>
        <PaletteArea>
          <Swatches>
            <NoPaint aria-label="No paint">
              <svg width="14" height="21"><path d="M-5 0L14 21M14 0L-5 21" stroke="#700000" strokeWidth="1.500" /></svg>
            </NoPaint>
            {palette.map((c, i) => <Swatch key={i} $c={`#${c}`} aria-label={`#${c}`} />)}
          </Swatches>
          <PaletteThumb />
        </PaletteArea>
        <PaletteMenu aria-label="Palette menu"><Icon name="chevronBack" /></PaletteMenu>
      </Footer>
    </Window>
  );
}
